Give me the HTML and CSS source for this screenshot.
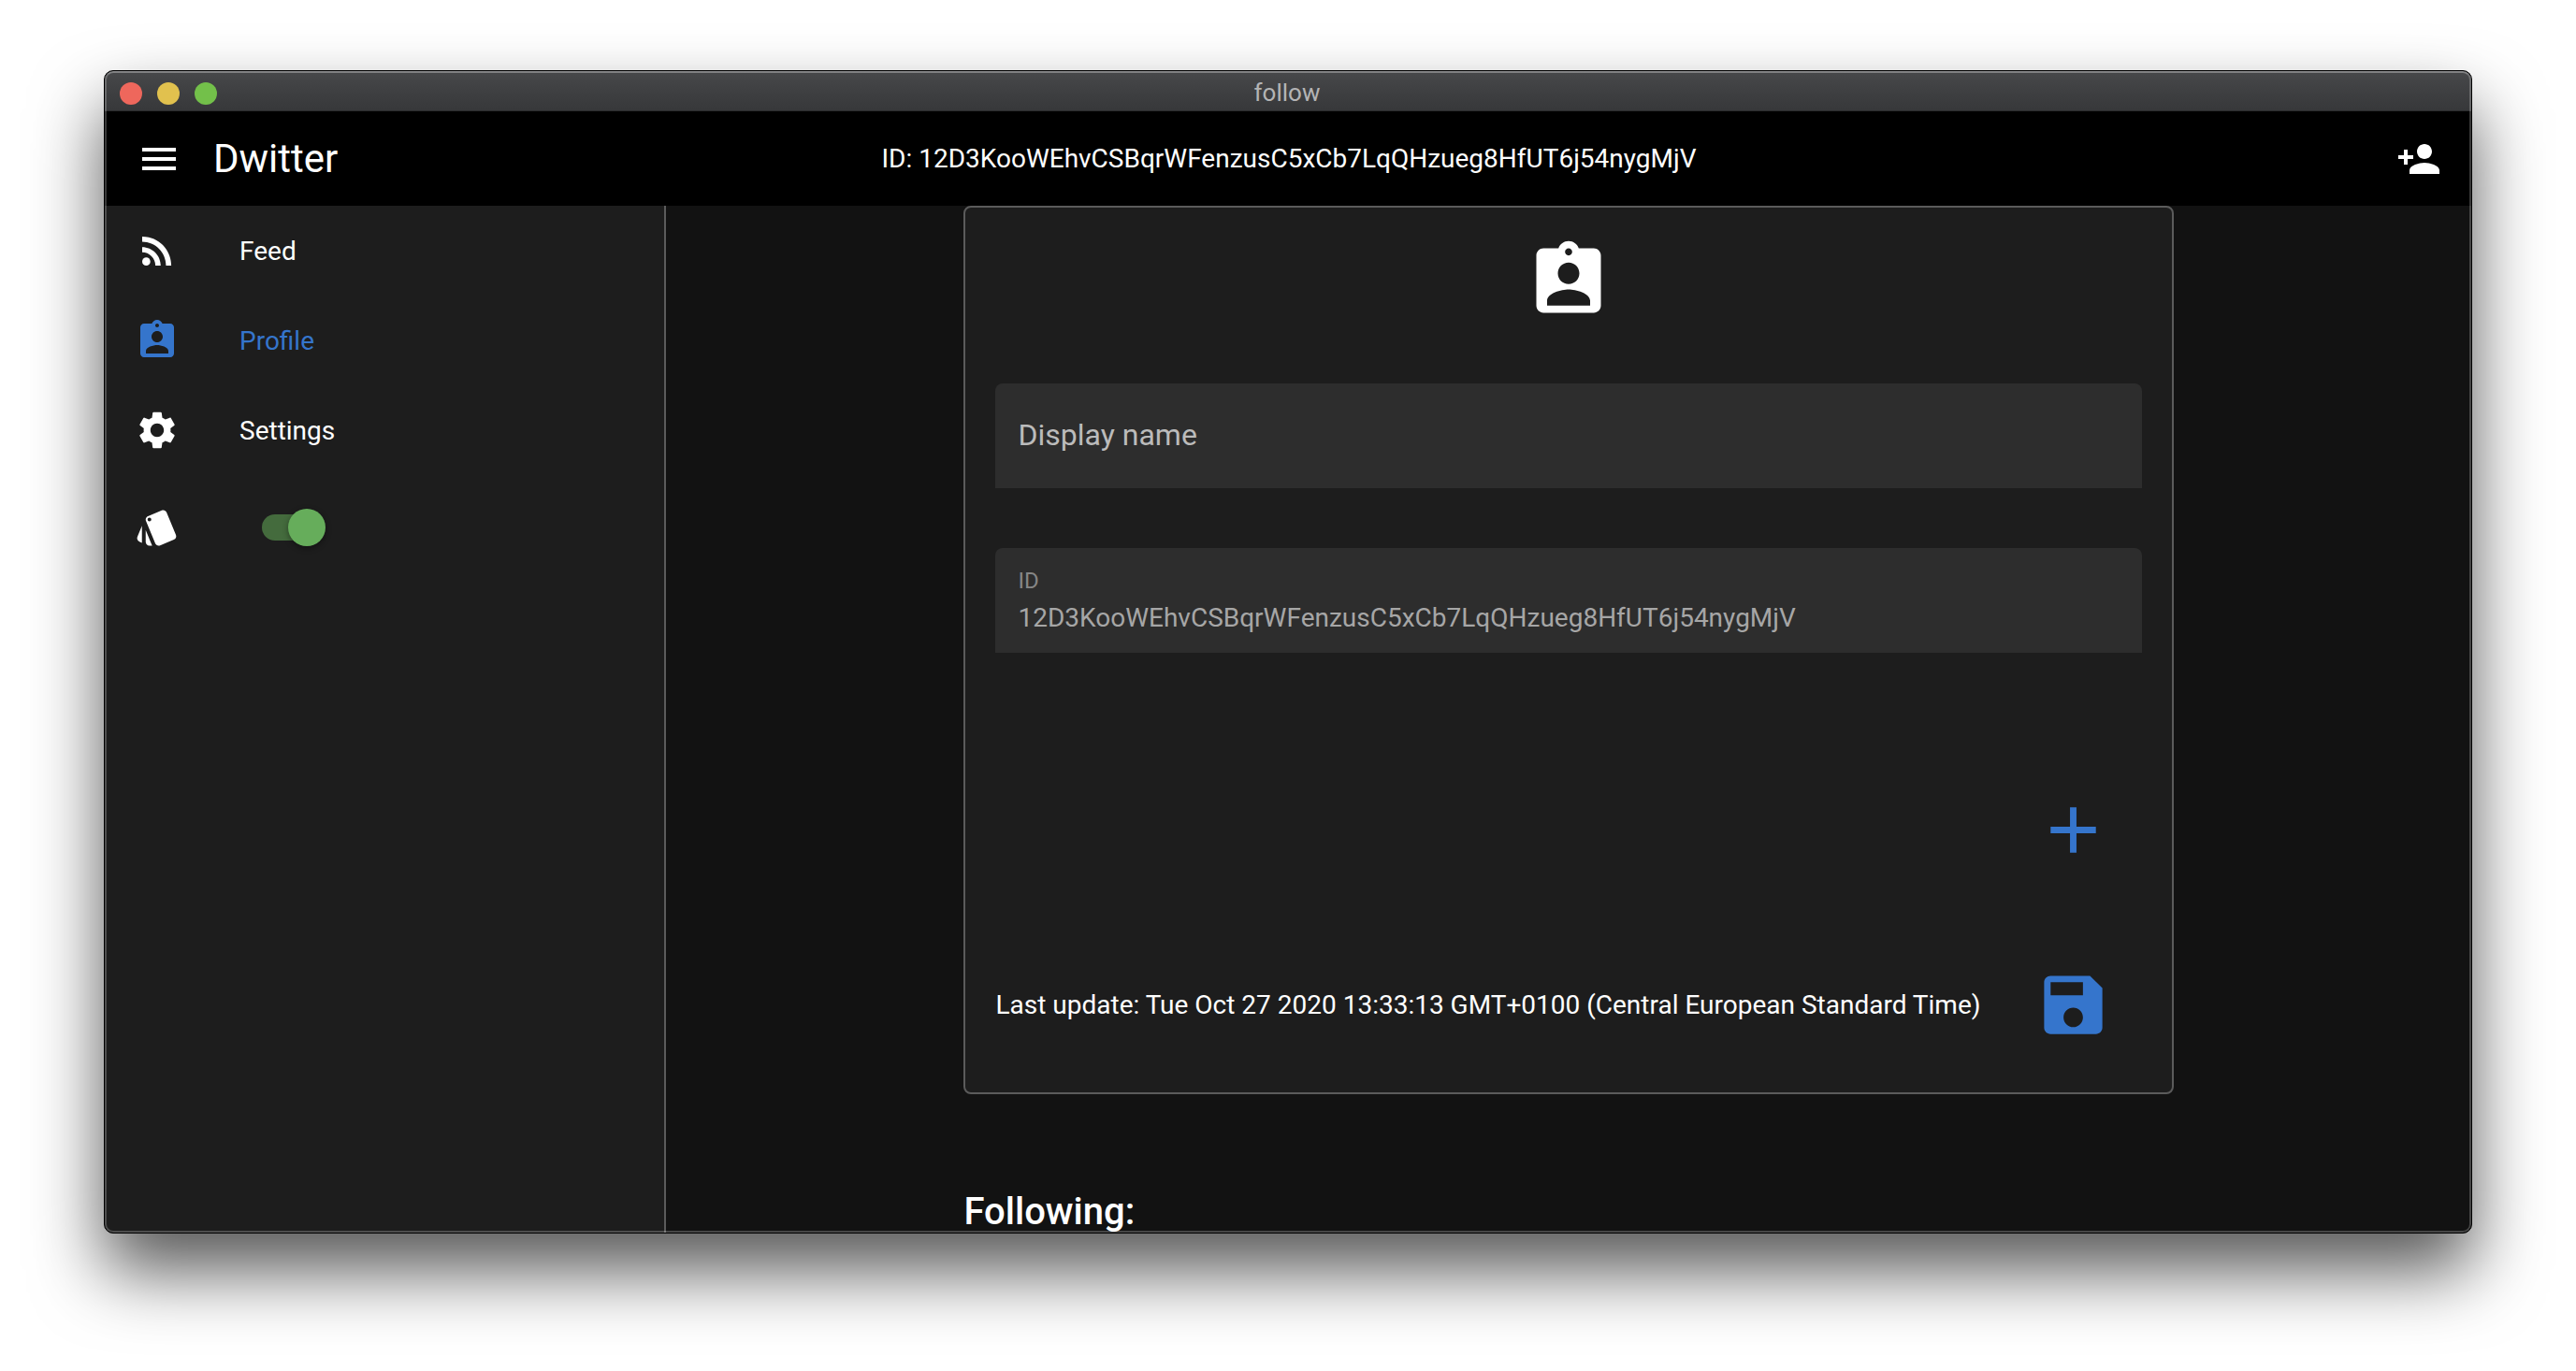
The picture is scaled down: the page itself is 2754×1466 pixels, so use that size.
FILE: index.html
```html
<!DOCTYPE html>
<html lang="en">
<head>
  <meta charset="utf-8">
  <title>follow</title>
  <link rel="stylesheet" href="styles.css">
</head>
<body>
  <div class="window">
    <div class="titlebar">
      <div class="lights">
        <button class="light light-close" aria-label="Close"></button>
        <button class="light light-minimize" aria-label="Minimize"></button>
        <button class="light light-zoom" aria-label="Zoom"></button>
      </div>
      <span class="window-title">follow</span>
    </div>

    <header class="toolbar">
      <div class="toolbar-start">
        <button class="icon-button" aria-label="Menu">
          <svg class="icon" viewBox="0 0 24 24"><path d="M3 18h18v-2H3v2zm0-5h18v-2H3v2zm0-7v2h18V6H3z"/></svg>
        </button>
        <h1 class="brand">Dwitter</h1>
      </div>
      <div class="peer-id">ID: 12D3KooWEhvCSBqrWFenzusC5xCb7LqQHzueg8HfUT6j54nygMjV</div>
      <div class="toolbar-end">
        <button class="icon-button" aria-label="Add person">
          <svg class="icon" viewBox="0 0 24 24"><path d="M15 12c2.21 0 4-1.79 4-4s-1.79-4-4-4-4 1.79-4 4 1.79 4 4 4zm-9-2V7H4v3H1v2h3v3h2v-3h3v-2H6zm9 4c-2.67 0-8 1.34-8 4v2h16v-2c0-2.66-5.33-4-8-4z"/></svg>
        </button>
      </div>
    </header>

    <div class="layout">
      <nav class="drawer">
        <a class="nav-item" href="#feed">
          <svg class="icon" viewBox="0 0 24 24"><circle cx="6.18" cy="17.82" r="2.18"/><path d="M4 4.44v2.83c7.03 0 12.73 5.7 12.73 12.73h2.83c0-8.59-6.97-15.56-15.56-15.56zm0 5.66v2.83c3.9 0 7.07 3.17 7.07 7.07h2.83c0-5.47-4.43-9.9-9.9-9.9z"/></svg>
          Feed
        </a>
        <a class="nav-item active" href="#profile">
          <svg class="icon" viewBox="0 0 24 24"><path d="M19 3h-4.180C14.400 1.840 13.300 1 12 1c-1.300 0-2.400.840-2.820 2H5c-1.100 0-2 .900-2 2v14c0 1.100.900 2 2 2h14c1.100 0 2-.900 2-2V5c0-1.100-.900-2-2-2zm-7 0c.550 0 1 .450 1 1s-.450 1-1 1-1-.450-1-1 .450-1 1-1zm0 4c1.660 0 3 1.340 3 3s-1.340 3-3 3-3-1.340-3-3 1.340-3 3-3zm6 12H6v-1.400c0-2 4-3.100 6-3.100s6 1.100 6 3.100V19z"/></svg>
          Profile
        </a>
        <a class="nav-item" href="#settings">
          <svg class="icon" viewBox="0 0 24 24"><path d="M19.140 12.940c.040-.300.060-.610.060-.940 0-.320-.020-.640-.070-.940l2.030-1.580c.180-.140.230-.410.120-.610l-1.920-3.320c-.120-.220-.370-.290-.590-.220l-2.390.960c-.500-.380-1.030-.700-1.620-.940L14.400 2.810c-.040-.240-.240-.410-.480-.410h-3.840c-.240 0-.430.170-.470.410L9.250 5.350c-.590.240-1.130.570-1.620.940l-2.390-.960c-.220-.080-.470 0-.590.220L2.740 8.870c-.120.210-.080.470.120.610l2.030 1.580c-.050.300-.090.630-.090.940s.020.640.070.940l-2.030 1.580c-.180.140-.230.410-.120.610l1.920 3.320c.120.220.370.290.590.220l2.390-.960c.500.380 1.030.700 1.620.940l.360 2.540c.050.240.240.410.480.410h3.840c.240 0 .440-.170.470-.410l.360-2.540c.590-.240 1.130-.560 1.620-.940l2.390.960c.220.080.470 0 .590-.220l1.920-3.320c.120-.220.070-.470-.120-.610l-2.010-1.580zM12 15.600c-1.980 0-3.600-1.620-3.600-3.600s1.620-3.600 3.600-3.600 3.600 1.620 3.600 3.600-1.620 3.600-3.600 3.600z"/></svg>
          Settings
        </a>
        <label class="nav-item nav-toggle">
          <svg class="icon" viewBox="0 0 24 24"><path d="M2.530 19.650l1.340.560v-9.030l-2.430 5.860c-.410 1.020.080 2.190 1.090 2.610zm19.500-3.700L17.070 3.980c-.310-.750-1.040-1.210-1.810-1.230-.260 0-.530.040-.790.150L7.100 5.950c-.750.310-1.210 1.030-1.230 1.800-.010.270.040.540.150.800l4.960 11.970c.310.760 1.050 1.220 1.830 1.230.260 0 .520-.050.770-.150l7.360-3.050c1.020-.420 1.510-1.590 1.090-2.600zM7.880 8.750c-.550 0-1-.450-1-1s.450-1 1-1 1 .450 1 1-.450 1-1 1zm-2 11c0 1.100.900 2 2 2h1.450l-3.450-8.340v6.340z"/></svg>
          <input class="toggle" type="checkbox" aria-label="Dark mode" checked>
        </label>
      </nav>

      <main class="page">
        <form class="card">
          <svg class="icon card-icon" viewBox="0 0 24 24"><path d="M19 3h-4.180C14.400 1.840 13.300 1 12 1c-1.300 0-2.400.840-2.820 2H5c-1.100 0-2 .900-2 2v14c0 1.100.900 2 2 2h14c1.100 0 2-.900 2-2V5c0-1.100-.900-2-2-2zm-7 0c.550 0 1 .450 1 1s-.450 1-1 1-1-.450-1-1 .450-1 1-1zm0 4c1.660 0 3 1.340 3 3s-1.340 3-3 3-3-1.340-3-3 1.340-3 3-3zm6 12H6v-1.400c0-2 4-3.100 6-3.100s6 1.100 6 3.100V19z"/></svg>
          <div class="field">
            <label class="field-label" for="display-name">Display name</label>
            <input class="field-input" id="display-name" type="text">
          </div>
          <div class="field field-filled">
            <label class="field-label" for="profile-id">ID</label>
            <input class="field-input" id="profile-id" type="text" value="12D3KooWEhvCSBqrWFenzusC5xCb7LqQHzueg8HfUT6j54nygMjV" readonly>
          </div>
          <div class="card-actions">
            <button class="action" type="button" aria-label="Add">
              <svg class="icon" viewBox="0 0 24 24"><path d="M19 13h-6v6h-2v-6H5v-2h6V5h2v6h6v2z"/></svg>
            </button>
          </div>
          <div class="card-footer">
            <p class="updated">Last update: Tue Oct 27 2020 13:33:13 GMT+0100 (Central European Standard Time)</p>
            <button class="action" type="button" aria-label="Save">
              <svg class="icon" viewBox="0 0 24 24"><path fill-rule="evenodd" d="M17.170 3H5c-1.110 0-2 .900-2 2v14c0 1.100.890 2 2 2h14c1.100 0 2-.900 2-2V6.830L17.170 3zM12 18.900c-1.660 0-3-1.340-3-3s1.340-3 3-3 3 1.340 3 3-1.340 3-3 3zM5 5h10v4H5V5z"/></svg>
            </button>
          </div>
        </form>
        <h2 class="section-title">Following:</h2>
      </main>
    </div>
  </div>
</body>
</html>
```

FILE: styles.css
```css
* {
  box-sizing: border-box;
}

body {
  display: flex;
  height: 100vh;
  margin: 0;
  padding: 75px 111px 147px;
  overflow: hidden;
  background: #fff;
  color: #fff;
  font-family: Roboto, "Liberation Sans", sans-serif;
  font-size: 28px;
  line-height: 43px;
}

button,
input {
  margin: 0;
  padding: 0;
  border: 0;
  background: none;
  color: inherit;
  font: inherit;
}

.icon {
  flex: none;
  width: 48px;
  height: 48px;
  fill: currentColor;
}

/* Window frame */

.window {
  position: relative;
  display: flex;
  flex: 1;
  flex-direction: column;
  min-width: 0;
  overflow: hidden;
  border: 1px solid #000;
  border-radius: 10px;
  background: #121212;
  box-shadow: 0 40px 76px rgba(0, 0, 0, 0.66);
}

.window::after {
  position: absolute;
  inset: 0;
  border: 2px solid rgba(255, 255, 255, 0.22);
  border-top-color: rgba(255, 255, 255, 0.32);
  border-radius: 9px;
  content: "";
  pointer-events: none;
}

.titlebar {
  display: grid;
  flex: none;
  grid-template-columns: 1fr auto 1fr;
  align-items: center;
  height: 43px;
  padding: 2px 18px 0 16px;
  border-bottom: 1px solid #2c2c2e;
  background: linear-gradient(#47484a, #37383a);
}

.lights {
  display: flex;
  gap: 16px;
}

.light {
  width: 24px;
  height: 24px;
  border-radius: 50%;
}

.light-close {
  background: #ee675c;
}

.light-minimize {
  background: #e1c14e;
}

.light-zoom {
  background: #73c04a;
}

.window-title {
  color: #b4b4b5;
  font-size: 26px;
}

/* Toolbar */

.toolbar {
  display: grid;
  flex: none;
  grid-template-columns: 1fr auto 1fr;
  align-items: center;
  height: 101px;
  padding: 0 32px 0 34px;
  background: #000;
}

.toolbar-start,
.toolbar-end {
  display: flex;
  align-items: center;
}

.toolbar-start {
  gap: 34px;
}

.toolbar-end {
  justify-content: flex-end;
}

.icon-button {
  display: flex;
}

.brand {
  margin: 0;
  font-size: 42px;
  font-weight: 400;
}

/* Drawer */

.layout {
  display: flex;
  flex: 1;
  min-height: 0;
}

.drawer {
  flex: none;
  width: 600px;
  border-right: 2px solid #5b5b5b;
  background: #1d1d1d;
}

.nav-item {
  display: flex;
  gap: 64px;
  align-items: center;
  height: 96px;
  padding: 0 32px;
  color: #fff;
  text-decoration: none;
}

.nav-item.active {
  color: #3575cc;
}

.nav-toggle {
  height: 112px;
}

.toggle {
  display: flex;
  align-items: center;
  justify-content: flex-end;
  width: 64px;
  height: 28px;
  margin-left: 24px;
  border-radius: 14px;
  background: #446b3d;
  appearance: none;
}

.toggle::before {
  flex: none;
  width: 40px;
  height: 40px;
  margin-right: -4px;
  border-radius: 50%;
  background: #66ad5b;
  box-shadow: 0 2px 6px rgba(0, 0, 0, 0.4);
  content: "";
}

/* Profile page */

.page {
  flex: 1;
  min-width: 0;
  overflow: hidden;
}

.card {
  display: flex;
  flex-direction: column;
  gap: 64px;
  width: 67%;
  margin: 0 auto;
  padding: 32px;
  border: 2px solid #5b5b5b;
  border-radius: 8px;
  background: #1d1d1d;
}

.card-icon {
  align-self: center;
  width: 92px;
  height: 92px;
}

.field {
  display: grid;
  height: 112px;
  padding: 0 24px 2px;
  border-radius: 8px 8px 0 0;
  background: #2d2d2d;
}

.field-label,
.field-input {
  grid-area: 1 / 1;
  min-width: 0;
}

.field-label {
  align-self: center;
  color: #bbb;
  font-size: 32px;
}

.field-filled {
  grid-template-rows: 42px 36px;
  padding: 14px 24px;
}

.field-filled .field-label {
  color: #868686;
  font-size: 24px;
}

.field-filled .field-input {
  grid-area: 2 / 1;
  color: #a6a6a6;
}

.card-actions {
  display: flex;
  justify-content: flex-end;
  padding-top: 64px;
}

.card-footer {
  display: flex;
  align-items: center;
  justify-content: space-between;
}

.updated {
  margin: 0;
}

.action {
  display: flex;
  align-items: center;
  justify-content: center;
  width: 146px;
  height: 123px;
  color: #3575cc;
}

.action .icon {
  width: 83px;
  height: 83px;
}

.section-title {
  width: 67%;
  margin: 94px auto 0;
  font-size: 40px;
  font-weight: 500;
  line-height: 64px;
}
```
